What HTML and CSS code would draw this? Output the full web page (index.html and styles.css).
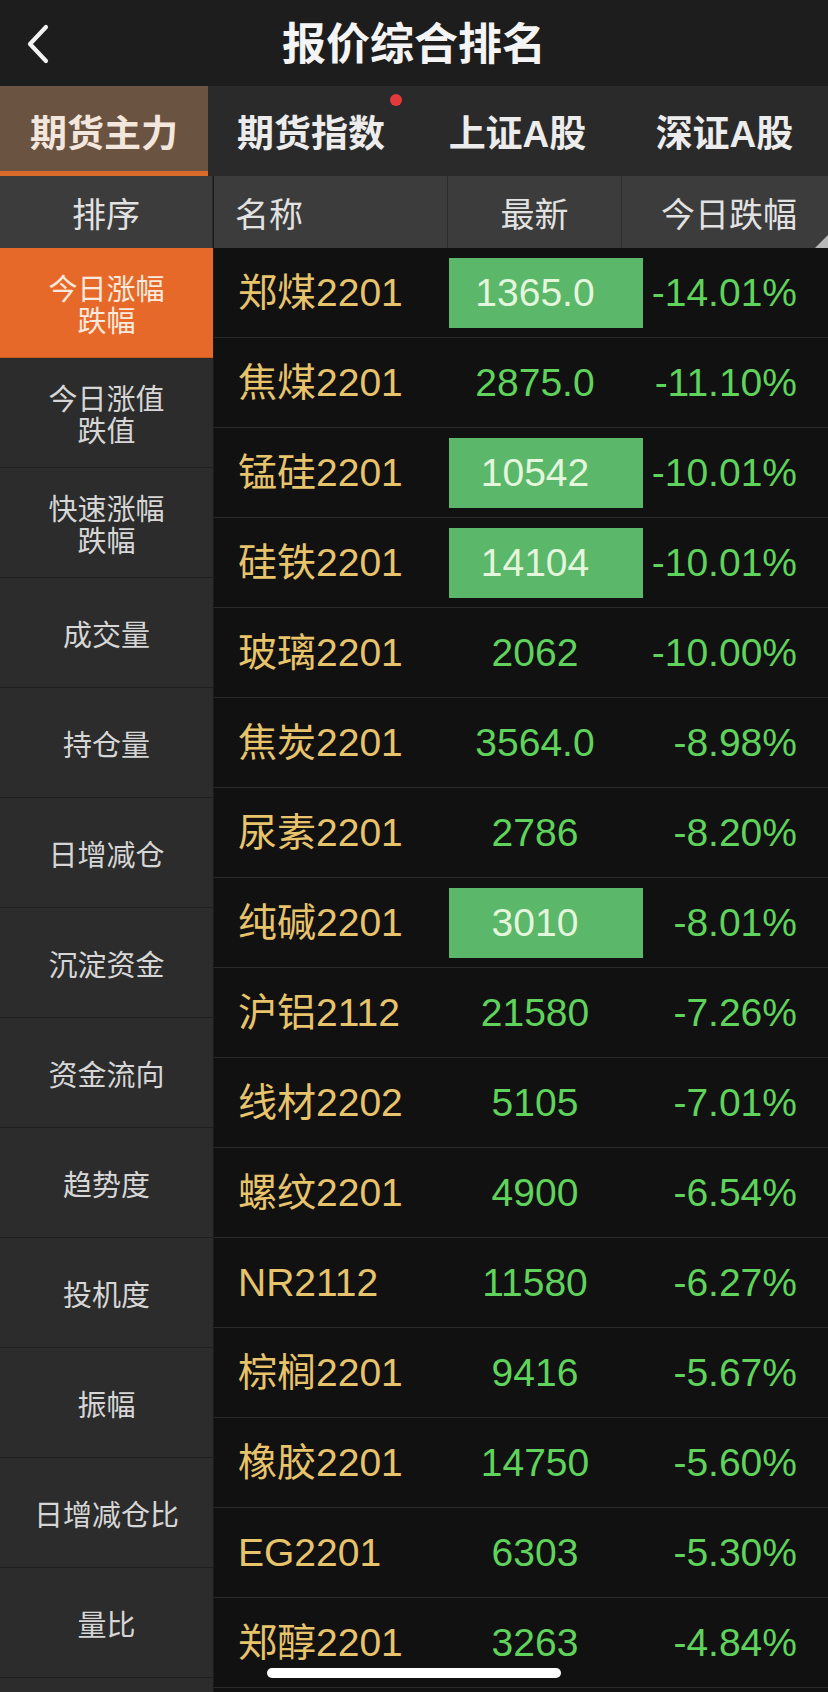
FILE: index.html
```html
<!DOCTYPE html>
<html lang="zh-CN">
<head>
<meta charset="utf-8">
<title>报价综合排名</title>
<link rel="stylesheet" href="styles.css">
</head>
<body>
<div class="app">
  <header class="topbar">
    <div class="back">
      <svg width="24" height="40" viewBox="0 0 24 40"><polyline points="19,3 3,20 19,37" fill="none" stroke="#f2f2f2" stroke-width="4.2" stroke-linecap="round" stroke-linejoin="round"/></svg>
    </div>
    <h1 class="title">报价综合排名</h1>
    <div></div>
  </header>

  <nav class="tabs">
    <div class="tab active">期货主力</div>
    <div class="tab">期货指数<span class="dot"></span></div>
    <div class="tab">上证A股</div>
    <div class="tab">深证A股</div>
  </nav>

  <div class="content">
    <aside class="side">
      <div class="side-head">排序</div>
      <div class="side-item active"><span class="two">今日涨幅跌幅</span></div>
      <div class="side-item"><span class="two">今日涨值跌值</span></div>
      <div class="side-item"><span class="two">快速涨幅跌幅</span></div>
      <div class="side-item">成交量</div>
      <div class="side-item">持仓量</div>
      <div class="side-item">日增减仓</div>
      <div class="side-item">沉淀资金</div>
      <div class="side-item">资金流向</div>
      <div class="side-item">趋势度</div>
      <div class="side-item">投机度</div>
      <div class="side-item">振幅</div>
      <div class="side-item">日增减仓比</div>
      <div class="side-item">量比</div>
      <div class="side-item"></div>
    </aside>

    <main class="table">
      <div class="thead">
        <div class="th th-name">名称</div>
        <div class="th th-price">最新</div>
        <div class="th th-pct">今日跌幅<span class="tri"></span></div>
      </div>
      <div class="row"><div class="name">郑煤2201</div><div class="price hl">1365.0</div><div class="pct">-14.01%</div></div>
      <div class="row"><div class="name">焦煤2201</div><div class="price">2875.0</div><div class="pct">-11.10%</div></div>
      <div class="row"><div class="name">锰硅2201</div><div class="price hl">10542</div><div class="pct">-10.01%</div></div>
      <div class="row"><div class="name">硅铁2201</div><div class="price hl">14104</div><div class="pct">-10.01%</div></div>
      <div class="row"><div class="name">玻璃2201</div><div class="price">2062</div><div class="pct">-10.00%</div></div>
      <div class="row"><div class="name">焦炭2201</div><div class="price">3564.0</div><div class="pct">-8.98%</div></div>
      <div class="row"><div class="name">尿素2201</div><div class="price">2786</div><div class="pct">-8.20%</div></div>
      <div class="row"><div class="name">纯碱2201</div><div class="price hl">3010</div><div class="pct">-8.01%</div></div>
      <div class="row"><div class="name">沪铝2112</div><div class="price">21580</div><div class="pct">-7.26%</div></div>
      <div class="row"><div class="name">线材2202</div><div class="price">5105</div><div class="pct">-7.01%</div></div>
      <div class="row"><div class="name">螺纹2201</div><div class="price">4900</div><div class="pct">-6.54%</div></div>
      <div class="row"><div class="name">NR2112</div><div class="price">11580</div><div class="pct">-6.27%</div></div>
      <div class="row"><div class="name">棕榈2201</div><div class="price">9416</div><div class="pct">-5.67%</div></div>
      <div class="row"><div class="name">橡胶2201</div><div class="price">14750</div><div class="pct">-5.60%</div></div>
      <div class="row"><div class="name">EG2201</div><div class="price">6303</div><div class="pct">-5.30%</div></div>
      <div class="row"><div class="name">郑醇2201</div><div class="price">3263</div><div class="pct">-4.84%</div></div>
    </main>
  </div>

  <div class="home-ind"></div>
</div>
</body>
</html>
```

FILE: styles.css
```css
* { box-sizing: border-box; margin: 0; padding: 0; }

html, body {
  width: 828px;
  height: 1692px;
  overflow: hidden;
  background: #111111;
}

body {
  font-family: "Liberation Sans", "Noto Sans CJK SC", sans-serif;
  color: #e0e0e0;
}

.app {
  position: relative;
  width: 828px;
  height: 1692px;
  overflow: hidden;
  display: flex;
  flex-direction: column;
}

/* top bar */
.topbar {
  height: 86px;
  flex: 0 0 86px;
  background: #1d1d1d;
  display: grid;
  grid-template-columns: 100px 1fr 100px;
  align-items: center;
}
.back {
  padding-left: 27px;
  display: flex;
  align-items: center;
  padding-top: 2px;
}
.title {
  text-align: center;
  font-family: "Noto Sans CJK SC", sans-serif;
  font-size: 44px;
  font-weight: 700;
  color: #f4f4f4;
  line-height: 1;
  margin-top: -4px;
}

/* tabs */
.tabs {
  height: 90px;
  flex: 0 0 90px;
  background: #2a2a2a;
  display: grid;
  grid-template-columns: 208px 206px 207px 207px;
}
.tab {
  position: relative;
  display: flex;
  align-items: center;
  justify-content: center;
  font-family: "Liberation Sans", "Noto Sans CJK SC", sans-serif;
  font-size: 37px;
  font-weight: 700;
  color: #ececec;
}
.tab.active {
  background: #6a5341;
  color: #f3e6dc;
  border-bottom: 5px solid #da6a2a;
  padding-top: 5px;
}
.dot {
  position: absolute;
  top: 8px;
  right: 12px;
  width: 12px;
  height: 12px;
  border-radius: 50%;
  background: #e23a3a;
}

/* content */
.content {
  flex: 1;
  display: flex;
  min-height: 0;
}

.side {
  width: 214px;
  flex: 0 0 214px;
  background: #2c2c2c;
  border-right: 1px solid #1a1a1a;
  display: flex;
  flex-direction: column;
}
.side-head {
  height: 72px;
  flex: 0 0 72px;
  background: #3c3c3c;
  border-right: 1px solid #2a2a2a;
  display: flex;
  align-items: center;
  justify-content: center;
  font-family: "Noto Sans CJK SC", sans-serif;
  font-size: 34px;
  color: #e2e2e2;
}
.side-item {
  height: 110px;
  flex: 0 0 110px;
  display: flex;
  align-items: center;
  justify-content: center;
  text-align: center;
  font-family: "Noto Sans CJK SC", sans-serif;
  font-size: 29px;
  line-height: 32px;
  color: #d6d6d6;
  border-bottom: 1px solid #1f1f1f;
}
.side-item .two {
  display: block;
  width: 120px;
  text-align: center;
}
.side-item.active {
  background: #e6692a;
  color: #fbe9dd;
  border-bottom-color: #c95a22;
}

/* table */
.table {
  flex: 1;
  display: flex;
  flex-direction: column;
  background: #111111;
}
.thead {
  height: 72px;
  flex: 0 0 72px;
  background: #3c3c3c;
  display: grid;
  grid-template-columns: 234px 174px 1fr;
}
.th {
  position: relative;
  display: flex;
  align-items: center;
  font-family: "Noto Sans CJK SC", sans-serif;
  font-size: 34px;
  color: #e2e2e2;
}
.th-name {
  padding-left: 21px;
  border-right: 1px solid #2c2c2c;
}
.th-price {
  justify-content: center;
  border-right: 1px solid #2c2c2c;
}
.th-pct {
  justify-content: flex-end;
  padding-right: 31px;
}
.tri {
  position: absolute;
  right: 0;
  bottom: 0;
  width: 0;
  height: 0;
  border-style: solid;
  border-width: 0 0 13px 13px;
  border-color: transparent transparent #b8b8b8 transparent;
}

.row {
  height: 90px;
  flex: 0 0 90px;
  display: grid;
  grid-template-columns: 235px 194px 1fr;
  align-items: center;
  border-bottom: 1px solid #2a2a2a;
  font-size: 39px;
  line-height: 45px;
}
.name {
  padding-left: 24px;
  color: #e7c36c;
  white-space: nowrap;
}
.price {
  height: 70px;
  display: flex;
  align-items: center;
  justify-content: center;
  padding-right: 22px;
  color: #5fd35b;
}
.price.hl {
  background: #5bb86a;
  color: #e4f6dc;
}
.pct {
  text-align: right;
  padding-right: 31px;
  color: #5fd35b;
}

.home-ind {
  position: absolute;
  left: 267px;
  top: 1668px;
  width: 294px;
  height: 10px;
  border-radius: 5px;
  background: #ffffff;
}
```
